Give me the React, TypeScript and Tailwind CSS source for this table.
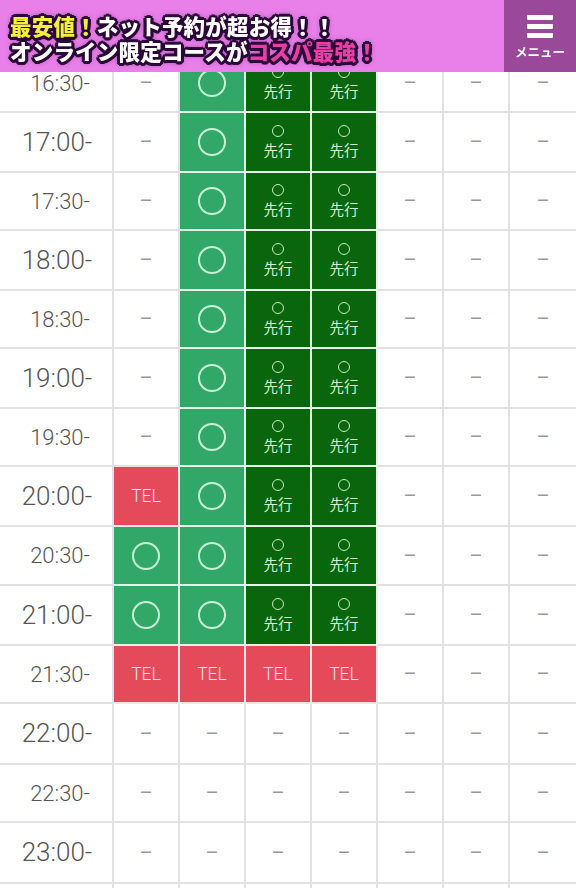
type Mark = "dash" | "maru" | "sen" | "tel";

type Row = {
  time: string;
  hour: boolean;
  h: number;
  cells: Mark[];
};

const D: Mark = "dash";

const rows: Row[] = [
  { time: "16:30", hour: false, h: 58, cells: [D, "maru", "sen", "sen", D, D, D] },
  { time: "17:00", hour: true, h: 60, cells: [D, "maru", "sen", "sen", D, D, D] },
  { time: "17:30", hour: false, h: 58, cells: [D, "maru", "sen", "sen", D, D, D] },
  { time: "18:00", hour: true, h: 60, cells: [D, "maru", "sen", "sen", D, D, D] },
  { time: "18:30", hour: false, h: 58, cells: [D, "maru", "sen", "sen", D, D, D] },
  { time: "19:00", hour: true, h: 60, cells: [D, "maru", "sen", "sen", D, D, D] },
  { time: "19:30", hour: false, h: 58, cells: [D, "maru", "sen", "sen", D, D, D] },
  { time: "20:00", hour: true, h: 60, cells: ["tel", "maru", "sen", "sen", D, D, D] },
  { time: "20:30", hour: false, h: 59, cells: ["maru", "maru", "sen", "sen", D, D, D] },
  { time: "21:00", hour: true, h: 60, cells: ["maru", "maru", "sen", "sen", D, D, D] },
  { time: "21:30", hour: false, h: 58, cells: ["tel", "tel", "tel", "tel", D, D, D] },
  { time: "22:00", hour: true, h: 61, cells: [D, D, D, D, D, D, D] },
  { time: "22:30", hour: false, h: 58, cells: [D, D, D, D, D, D, D] },
  { time: "23:00", hour: true, h: 61, cells: [D, D, D, D, D, D, D] },
  { time: "23:30", hour: false, h: 58, cells: [D, D, D, D, D, D, D] },
];

const heights: Record<number, string> = {
  58: "h-[58px]",
  59: "h-[59px]",
  60: "h-[60px]",
  61: "h-[61px]",
};

const outline =
  "[text-shadow:3px_0_#2a0838,-3px_0_#2a0838,0_3px_#2a0838,0_-3px_#2a0838,2px_2px_#2a0838,-2px_-2px_#2a0838,2px_-2px_#2a0838,-2px_2px_#2a0838,3px_1px_#2a0838,-3px_1px_#2a0838,1px_3px_#2a0838,-1px_3px_#2a0838,0_0_6px_#3a0a4a]";

function Header() {
  return (
    <header className="fixed top-0 left-0 right-0 z-10 flex h-[72px]">
      <div className="flex flex-1 flex-col justify-center bg-[#e97fe9] pl-[10px] pt-[3px] font-['Noto_Sans_CJK_JP',sans-serif] text-[21.5px] font-black leading-[25px] tracking-[0.2px] text-white">
        <p className={outline}>
          <span className="text-[#f2f03a]">最安値！</span>
          ネット予約が超お得！！
        </p>
        <p className={outline}>
          オンライン限定コースが
          <span className="text-[#ea3ea6]">コスパ最強！</span>
        </p>
      </div>
      <div className="flex w-[72px] flex-col items-center bg-[#9a489a] pt-[15px]">
        <div className="flex w-[26px] flex-col gap-[4px]">
          <span className="h-[5px] rounded-[1px] bg-white" />
          <span className="h-[5px] rounded-[1px] bg-white" />
          <span className="h-[5px] rounded-[1px] bg-white" />
        </div>
        <span className="mt-[7px] font-['Noto_Sans_CJK_JP',sans-serif] text-[12.5px] font-bold leading-[14px] text-white">
          メニュー
        </span>
      </div>
    </header>
  );
}

function Cell({ mark, last }: { mark: Mark; last: boolean }) {
  const edge = last ? "border-b-2" : "border-b-2 border-r-2";

  if (mark === "maru") {
    return (
      <div className={`${edge} flex items-center justify-center border-[#e4f4e6] bg-[#31a868]`}>
        <span className="h-[28px] w-[28px] rounded-full border-2 border-[#c8f2d4]" />
      </div>
    );
  }

  if (mark === "sen") {
    return (
      <div className={`${edge} flex flex-col items-center justify-center border-[#e4f4e6] bg-[#0a660c]`}>
        <span className="h-[12px] w-[12px] rounded-full border border-[#c9ebc4]" />
        <span className="mt-[4px] font-['Noto_Sans_CJK_JP',sans-serif] text-[14.5px] leading-[18px] text-[#d6f1cf]">
          先行
        </span>
      </div>
    );
  }

  if (mark === "tel") {
    return (
      <div className={`${edge} flex items-center justify-center border-[#f6e6e8] bg-[#e44a59]`}>
        <span className="font-['Roboto',sans-serif] text-[17.5px] font-light text-[#fbe6e6]">TEL</span>
      </div>
    );
  }

  return (
    <div className={`${edge} flex items-center justify-center border-[#e2e2e2] bg-white`}>
      <span className="font-['Roboto',sans-serif] text-[20px] text-[#999]">–</span>
    </div>
  );
}

export default function App() {
  return (
    <div className="min-h-screen bg-white">
      <Header />

      <main className="pt-[55px]">
        {rows.map((row) => (
          <div
            key={row.time}
            className={`grid grid-cols-[114px_repeat(7,minmax(0,1fr))] ${heights[row.h]}`}
          >
            <div
              className={`flex items-center justify-center border-r-2 border-b-2 border-[#e2e2e2] ${
                row.hour ? "pl-[2px]" : "pl-[8px]"
              }`}
            >
              <span
                className={`font-['Roboto',sans-serif] font-light text-[#555] ${
                  row.hour ? "text-[26px]" : "text-[22px]"
                }`}
              >
                {row.time}-
              </span>
            </div>
            {row.cells.map((mark, i) => (
              <Cell key={i} mark={mark} last={i === row.cells.length - 1} />
            ))}
          </div>
        ))}
      </main>
    </div>
  );
}
